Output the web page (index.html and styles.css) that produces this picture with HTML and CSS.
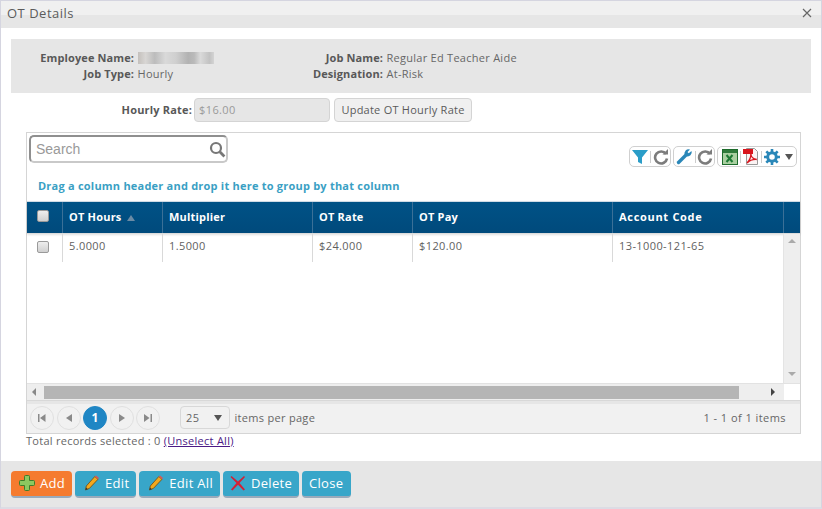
FILE: index.html
```html
<!DOCTYPE html>
<html lang="en">
<head>
<meta charset="utf-8">
<title>OT Details</title>
<link rel="stylesheet" href="styles.css">
</head>
<body>
<div class="window">
  <header class="titlebar">
    <span class="title">OT Details</span>
    <svg class="close" width="10" height="10" viewBox="0 0 10 10"><path d="M1 1l8 8M9 1l-8 8" stroke="#666" stroke-width="1.2" fill="none"/></svg>
  </header>
  <div class="content">
    <section class="info">
      <span class="lbl">Employee Name:</span><span class="val"><span class="blur"></span></span>
      <span class="lbl">Job Name:</span><span class="val">Regular Ed Teacher Aide</span>
      <span class="lbl">Job Type:</span><span class="val">Hourly</span>
      <span class="lbl">Designation:</span><span class="val">At-Risk</span>
    </section>
    <section class="rate">
      <span class="lbl rate-lbl">Hourly Rate:</span>
      <div class="rate-input">$16.00</div>
      <button class="rate-btn">Update OT Hourly Rate</button>
    </section>
    <section class="grid">
      <div class="toolbar">
        <div class="search">
          <span class="search-ph">Search</span>
          <svg width="17" height="17" viewBox="0 0 17 17"><circle cx="7" cy="7" r="5" stroke="#777" stroke-width="2.2" fill="none"/><path d="M10.8 10.8l4.6 4.6" stroke="#777" stroke-width="2.8"/></svg>
        </div>
        <div class="tools">
          <div class="tgroup">
            <svg width="16" height="16" viewBox="0 0 16 16"><path d="M0 1h16L10 8.500V15l-4-2V8.500z" fill="#2a9dc8"/></svg>
            <i class="sep"></i>
            <svg width="16" height="16" viewBox="0 0 16 16"><path d="M13 5A6 6 0 1 0 14 9.500" stroke="#7c7c7c" stroke-width="2.600" fill="none"/><path d="M9.500 5.500h5.500V0z" fill="#7c7c7c"/></svg>
          </div>
          <div class="tgroup">
            <svg width="17" height="17" viewBox="0 0 17 17"><path d="M2.500 14.500l8-8" stroke="#2a87b8" stroke-width="3.400" stroke-linecap="round"/><path d="M9 7a4 4 0 0 1 5-5.500L11.500 4l1.200 1.200L15.500 3a4 4 0 0 1-5.500 5z" fill="#2a87b8"/></svg>
            <i class="sep"></i>
            <svg width="16" height="16" viewBox="0 0 16 16"><path d="M13 5A6 6 0 1 0 14 9.500" stroke="#7c7c7c" stroke-width="2.600" fill="none"/><path d="M9.500 5.500h5.500V0z" fill="#7c7c7c"/></svg>
          </div>
          <div class="tgroup wide">
            <svg width="16" height="16" viewBox="0 0 16 16"><rect x=".5" y=".5" width="15" height="15" fill="#a9cfa0" stroke="#1d6b2b"/><rect x="1" y="1" width="14" height="3" fill="#2f7a3a"/><path d="M4.500 6l6 7M10.500 6l-6 7" stroke="#1d7a33" stroke-width="2"/></svg>
            <i class="sep"></i>
            <svg width="16" height="17" viewBox="0 0 16 17"><path d="M3.500.500h8l3 3v13h-11z" fill="#fbf3f3" stroke="#999"/><rect x="0" y="1" width="10" height="5" fill="#d8141c"/><path d="M4 15c3-3 4-7 3.800-9.500.2 3 2 5.500 6 6-4-.3-7 .8-9.800 3.500z" fill="none" stroke="#d8141c" stroke-width="1.300"/></svg>
            <i class="sep"></i>
            <svg width="16" height="16" viewBox="0 0 16 16"><circle cx="8" cy="8" r="4.300" fill="none" stroke="#2a87b8" stroke-width="3"/><path d="M8 0v3M8 13v3M0 8h3M13 8h3M2.300 2.300l2.200 2.200M11.500 11.500l2.200 2.200M13.700 2.300l-2.200 2.200M4.500 11.500l-2.200 2.200" stroke="#2a87b8" stroke-width="2.600"/></svg>
            <span class="drop"></span>
          </div>
        </div>
      </div>
      <div class="groupbar">Drag a column header and drop it here to group by that column</div>
      <div class="thead cols">
        <div class="cell chk"><span class="cb"></span></div>
        <div class="cell">OT Hours<span class="sort"></span></div>
        <div class="cell">Multiplier</div>
        <div class="cell">OT Rate</div>
        <div class="cell">OT Pay</div>
        <div class="cell account">Account Code</div>
        <div class="cell"></div>
      </div>
      <div class="tbody">
        <div class="rows">
          <div class="trow cols">
            <div class="cell chk"><span class="cb"></span></div>
            <div class="cell">5.0000</div>
            <div class="cell">1.5000</div>
            <div class="cell">$24.000</div>
            <div class="cell">$120.00</div>
            <div class="cell">13-1000-121-65</div>
          </div>
        </div>
        <div class="vscroll"><span class="arr-up"></span><span class="arr-down"></span></div>
      </div>
      <div class="hscroll">
        <span class="arr-left"></span>
        <div class="hthumb"></div>
        <span class="arr-right"></span>
        <div class="corner"></div>
      </div>
      <div class="pager">
        <div class="pbtn"><svg width="8" height="8" viewBox="0 0 8 8"><path d="M0 0h1.500v8H0zM7.500 0v8L2 4z" fill="#8a8a8a"/></svg></div>
        <div class="pbtn"><svg width="6" height="8" viewBox="0 0 6 8"><path d="M6 0v8L0 4z" fill="#8a8a8a"/></svg></div>
        <div class="pbtn current">1</div>
        <div class="pbtn"><svg width="6" height="8" viewBox="0 0 6 8"><path d="M0 0v8l6-4z" fill="#8a8a8a"/></svg></div>
        <div class="pbtn"><svg width="8" height="8" viewBox="0 0 8 8"><path d="M0 0v8l5.500-4zM6.500 0H8v8H6.500z" fill="#8a8a8a"/></svg></div>
        <div class="pagesize"><span>25</span><i class="tri"></i></div>
        <span class="perpage">items per page</span>
        <span class="pinfo">1 - 1 of 1 items</span>
      </div>
    </section>
    <div class="total">Total records selected : 0 <a href="#">(Unselect All)</a></div>
  </div>
  <footer class="actions">
    <button class="btn add">
      <svg width="16" height="16" viewBox="0 0 16 16"><path d="M5.500 1.500a1 1 0 0 1 1-1h3a1 1 0 0 1 1 1v4h4a1 1 0 0 1 1 1v3a1 1 0 0 1-1 1h-4v4a1 1 0 0 1-1 1h-3a1 1 0 0 1-1-1v-4h-4a1 1 0 0 1-1-1v-3a1 1 0 0 1 1-1h4z" fill="#8cc860" stroke="#3f7d2a"/></svg>
      Add</button>
    <button class="btn edit">
      <svg width="16" height="16" viewBox="0 0 16 16"><path d="M1.500 15l.8-4L10.800 1.500l3.200 2.800-8.500 9z" fill="#f3a81d" stroke="#6d4a10" stroke-width=".8"/><path d="M10.800 1.500l3.200 2.800 1-1.200L12 .5z" fill="#d8575a"/><path d="M1.500 15l.5-2.400 1.900 1.600z" fill="#333"/></svg>
      Edit</button>
    <button class="btn editall">
      <svg width="16" height="16" viewBox="0 0 16 16"><path d="M1.500 15l.8-4L10.800 1.500l3.200 2.800-8.500 9z" fill="#f3a81d" stroke="#6d4a10" stroke-width=".8"/><path d="M10.800 1.500l3.200 2.800 1-1.200L12 .5z" fill="#d8575a"/><path d="M1.500 15l.5-2.400 1.900 1.600z" fill="#333"/></svg>
      Edit All</button>
    <button class="btn">
      <svg width="16" height="16" viewBox="0 0 16 16"><path d="M1.500 1l6.500 5.500L14 1l1 1-5.500 6L15 14.500 13.500 15.500 8 9.800 2.500 15.500 1 14.500 6.500 8 .5 2z" fill="#d32035"/></svg>
      Delete</button>
    <button class="btn closebtn">Close</button>
  </footer>
</div>
</body>
</html>
```
FILE: styles.css
```css
* { box-sizing: border-box; }
html, body { margin: 0; height: 100%; }
body {
  font-family: "Open Sans", "Liberation Sans", sans-serif;
  font-size: 11px;
  color: #666;
  background: #fff;
  overflow: hidden;
}
.window {
  width: 822px;
  height: 509px;
  border-top: 1px solid #d5d5e0;
  border-left: 1px solid #d5d5e0;
  border-right: 1px solid #d5d5e0;
  border-bottom: 2px solid #dcdce4;
  display: flex;
  flex-direction: column;
}
.titlebar {
  height: 27px;
  flex: none;
  background: linear-gradient(#f0f0f0 0, #f0f0f0 14px, #e6e6e6 14px);
  display: flex;
  align-items: center;
  justify-content: space-between;
  padding: 0 9px 3px 6px;
}
.title { font-size: 13px; letter-spacing: .5px; color: #5b5b5b; }
.content { flex: 1; padding: 11px 10px 0; display: flex; flex-direction: column; min-height: 0; }
.info {
  height: 54px;
  background: #e6e6e6;
  display: grid;
  grid-template-columns: 123px 111px 138px 1fr;
  grid-auto-rows: 16px;
  padding-top: 11px;
  line-height: 16px;
}
.lbl { font-weight: 700; text-align: right; color: #585858; letter-spacing: .1px; white-space: nowrap; }
.val { padding-left: 3.5px; letter-spacing: .27px; white-space: nowrap; color: #666; }
.blur {
  display: inline-block;
  width: 76px;
  height: 12px;
  vertical-align: -2px;
  background: linear-gradient(90deg, #c4c0bc 0, #d8d6d4 10%, #bcbcbc 22%, #d9d9d9 36%, #cfcfcf 50%, #b2b2b2 66%, #bababa 74%, #dadada 82%, #c2c2c2 94%, #d4d4d4 100%);
}
.rate { display: flex; align-items: center; height: 24px; margin-top: 5px; }
.rate-lbl { width: 181px; letter-spacing: .18px; padding-bottom: 2px; }
.rate-input {
  width: 136px;
  height: 24px;
  margin-left: 2px;
  border: 1px solid #d4d4d4;
  border-radius: 4px;
  background: #e6e6e6;
  color: #9a9a9a;
  padding-left: 4px;
  line-height: 21px;
  letter-spacing: .4px;
}
.rate-btn {
  width: 138px;
  height: 24px;
  margin-left: 4px;
  padding: 0 0 2px;
  border: 1px solid #d4d4d4;
  border-radius: 4px;
  background: #f0f0f0;
  font: inherit;
  color: #5b5b5b;
  letter-spacing: .24px;
}
.grid {
  width: 775px;
  height: 302px;
  margin: 10px 0 0 15px;
  border: 1px solid #d5d5d5;
  display: flex;
  flex-direction: column;
  flex: none;
}
.toolbar { height: 37px; flex: none; display: flex; justify-content: space-between; padding: 2px 3px 0 2px; }
.search {
  width: 199px;
  height: 28px;
  border: 2px solid #c9c9c9;
  border-top-color: #8f8f8f;
  border-left-color: #8f8f8f;
  border-radius: 5px;
  display: flex;
  align-items: center;
  justify-content: space-between;
  font-family: "Liberation Sans", sans-serif;
  font-size: 14px;
  color: #999;
  padding: 0 0 0 5px;
}
.tools { display: flex; gap: 2px; margin-top: 11px; height: 21px; }
.tgroup {
  height: 21px;
  border: 1px solid #d0d0d0;
  border-radius: 5px;
  display: flex;
  align-items: center;
  padding: 0 1px 0 2px;
  width: 42px;
  justify-content: space-between;
}
.tgroup.wide { width: 80px; padding: 0 3px 0 4px; }
.sep { width: 1px; height: 12px; background: #ccc; flex: none; }
.drop { width: 0; height: 0; margin-left: 3px; border: 4px solid transparent; border-top: 6px solid #555; border-bottom: 0; }
.groupbar {
  height: 31px;
  flex: none;
  padding: 8px 0 0 11px;
  line-height: 16px;
  font-weight: 700;
  color: #3a9fc4;
  letter-spacing: .22px;
  white-space: nowrap;
}
.cols { display: grid; grid-template-columns: 35px 100px 150px 100px 200px 171px 1fr; }
.thead {
  height: 33px;
  flex: none;
  background: linear-gradient(#005286, #004a7c);
  border-top: 1px solid #cfdbe5;
  border-bottom: 1px solid #dcdcdc;
  color: #fff;
  font-weight: 700;
  letter-spacing: .2px;
  box-shadow: 0 1px 2px rgba(0,0,0,.12);
}
.thead .cell { border-left: 1px solid #3b7097; line-height: 29px; padding-left: 6px; }
.thead .cell:first-child { border-left: 0; }
.thead .account { letter-spacing: .7px; }
.cb {
  display: block;
  width: 12px;
  height: 12px;
  border: 1px solid #9a9a9a;
  border-radius: 2px;
  background: linear-gradient(#eee, #d0d0d0);
}
.cell.chk { padding: 0 4px 3px 0 !important; display: flex; align-items: center; justify-content: center; }
.sort {
  display: inline-block;
  margin-left: 5px;
  width: 0;
  height: 0;
  border: 4px solid transparent;
  border-bottom: 6px solid #6b8ba5;
  border-top: 0;
}
.tbody { flex: 1; display: flex; min-height: 0; }
.rows { flex: 1; }
.trow { height: 28px; letter-spacing: .4px; grid-template-columns: 35px 100px 150px 100px 200px 1fr; }
.trow .cell { border-left: 1px solid #d9d9d9; line-height: 23px; padding-left: 6px; color: #5f5f5f; }
.trow .cell:first-child { border-left: 0; }
.vscroll {
  width: 17px;
  flex: none;
  background: #eee;
  border-left: 1px solid #e4e4e4;
  display: flex;
  flex-direction: column;
  justify-content: space-between;
  align-items: center;
  padding: 5px 0 7px;
}
.arr-up { width: 0; height: 0; border: 4px solid transparent; border-top: 0; border-bottom: 4px solid #aaa; }
.arr-down { width: 0; height: 0; border: 4px solid transparent; border-bottom: 0; border-top: 4px solid #aaa; }
.hscroll { height: 17px; flex: none; display: flex; align-items: center; background: #eee; border-top: 1px solid #e2e2e2; }
.arr-left { width: 0; height: 0; margin-left: 5px; border: 4px solid transparent; border-left: 0; border-right: 4px solid #888; }
.arr-right { width: 0; height: 0; margin-left: 32px; border: 4px solid transparent; border-right: 0; border-left: 4px solid #444; }
.hthumb { width: 695px; height: 13px; margin-left: 8px; background: #b5b5b5; }
.corner { flex: 1; height: 16px; background: #fff; margin-left: 9px; }
.pager {
  height: 33px;
  flex: none;
  display: flex;
  align-items: center;
  background: linear-gradient(#e6e6e6 0, #e6e6e6 3px, #f1f1f1 3px);
  border-top: 1px solid #d8d8d8;
  padding: 1px 14px 0 3px;
  gap: 2.5px;
}
.pbtn {
  width: 24px;
  height: 24px;
  border: 1px solid #e0e0e0;
  border-radius: 50%;
  display: flex;
  align-items: center;
  justify-content: center;
}
.pbtn.current { background: #1f86c4; border-color: #1f86c4; color: #fff; font-weight: 700; font-size: 12px; }
.pagesize {
  width: 50px;
  height: 23px;
  margin-left: 17.500px;
  border: 1px solid #d8d8d8;
  border-radius: 4px;
  display: flex;
  align-items: center;
  justify-content: space-between;
  padding: 0 7px 0 5px;
  letter-spacing: .4px;
}
.tri { width: 0; height: 0; border: 4px solid transparent; border-bottom: 0; border-top: 6px solid #555; }
.perpage { margin-left: 2px; letter-spacing: .3px; }
.pinfo { margin-left: auto; letter-spacing: .45px; }
.total { line-height: 16px; margin-top: -1px; padding-left: 15px; letter-spacing: .27px; white-space: nowrap; }
.total a { color: #4b1a86; }
.actions {
  height: 46px;
  flex: none;
  background: #e6e6e6;
  display: flex;
  gap: 3px;
  padding: 10px 0 0 10px;
}
.btn {
  height: 27px;
  padding: 0 7px 1px;
  border: 0;
  border-bottom: 2px solid #9ab;
  border-radius: 4px;
  background: #38a6c9;
  color: #fff;
  font: inherit;
  font-size: 13px;
  letter-spacing: .3px;
  display: flex;
  align-items: center;
  gap: 5px;
}
.btn.add { background: #f57b2f; padding-left: 8px; }
.btn.edit, .btn.editall { padding-left: 9px; }
.btn.closebtn { padding-right: 8px; }
```
